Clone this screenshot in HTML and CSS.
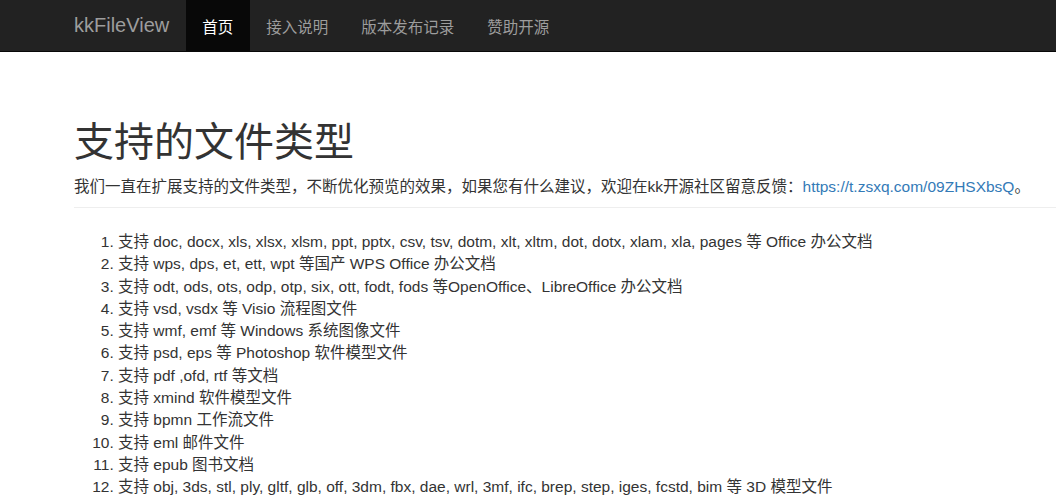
FILE: index.html
```html
<!DOCTYPE html>
<html lang="zh-CN">
<head>
<meta charset="utf-8">
<title>kkFileView</title>
<link rel="stylesheet" href="styles.css">
</head>
<body>
<nav class="navbar">
  <a class="brand" href="#">kkFileView</a>
  <ul class="nav">
    <li class="active"><a href="#">首页</a></li>
    <li><a href="#">接入说明</a></li>
    <li><a href="#">版本发布记录</a></li>
    <li><a href="#">赞助开源</a></li>
  </ul>
</nav>
<main class="main">
  <div class="page-header">
    <h1>支持的文件类型</h1>
    <p>我们一直在扩展支持的文件类型，不断优化预览的效果，如果您有什么建议，欢迎在kk开源社区留意反馈：<a href="#">https://t.zsxq.com/09ZHSXbsQ</a>。</p>
  </div>
  <ol class="types">
    <li>支持 doc, docx, xls, xlsx, xlsm, ppt, pptx, csv, tsv, dotm, xlt, xltm, dot, dotx, xlam, xla, pages 等 Office 办公文档</li>
    <li>支持 wps, dps, et, ett, wpt 等国产 WPS Office 办公文档</li>
    <li>支持 odt, ods, ots, odp, otp, six, ott, fodt, fods 等OpenOffice、LibreOffice 办公文档</li>
    <li>支持 vsd, vsdx 等 Visio 流程图文件</li>
    <li>支持 wmf, emf 等 Windows 系统图像文件</li>
    <li>支持 psd, eps 等 Photoshop 软件模型文件</li>
    <li>支持 pdf ,ofd, rtf 等文档</li>
    <li>支持 xmind 软件模型文件</li>
    <li>支持 bpmn 工作流文件</li>
    <li>支持 eml 邮件文件</li>
    <li>支持 epub 图书文档</li>
    <li>支持 obj, 3ds, stl, ply, gltf, glb, off, 3dm, fbx, dae, wrl, 3mf, ifc, brep, step, iges, fcstd, bim 等 3D 模型文件</li>
  </ol>
</main>
</body>
</html>
```
FILE: styles.css
```css
html, body {
  margin: 0;
  padding: 0;
  background: #fff;
}
body {
  font-family: "Liberation Sans", "Noto Sans CJK SC", sans-serif;
  font-size: 15.5px;
  color: #333;
  overflow: hidden;
}
a {
  text-decoration: none;
}
.navbar {
  display: flex;
  align-items: stretch;
  height: 51px;
  background: #222;
  border-bottom: 1px solid #080808;
  padding-left: 57px;
}
.brand {
  display: flex;
  align-items: center;
  padding: 0 16.5px 0 17px;
  font-size: 20px;
  color: #9d9d9d;
}
.nav {
  display: flex;
  margin: 0;
  padding: 0;
  list-style: none;
}
.nav li {
  display: flex;
}
.nav a {
  display: flex;
  align-items: center;
  padding: 0 16.5px;
  color: #9d9d9d;
  font-size: 15.5px;
}
.nav .active {
  background: #080808;
}
.nav .active a {
  color: #fff;
}
.main {
  padding-left: 74px;
}
.page-header {
  padding-bottom: 9px;
  border-bottom: 1px solid #eee;
}
h1 {
  margin: 68px 0 12px;
  font-size: 40px;
  line-height: 44px;
  font-weight: 400;
  color: #333;
}
.page-header p {
  margin: 0;
  line-height: 22px;
  font-size: 15.5px;
}
.page-header p a {
  color: #337ab7;
}
.types {
  margin: 23px 0 0;
  padding-left: 44px;
  line-height: 22.3px;
}
```
